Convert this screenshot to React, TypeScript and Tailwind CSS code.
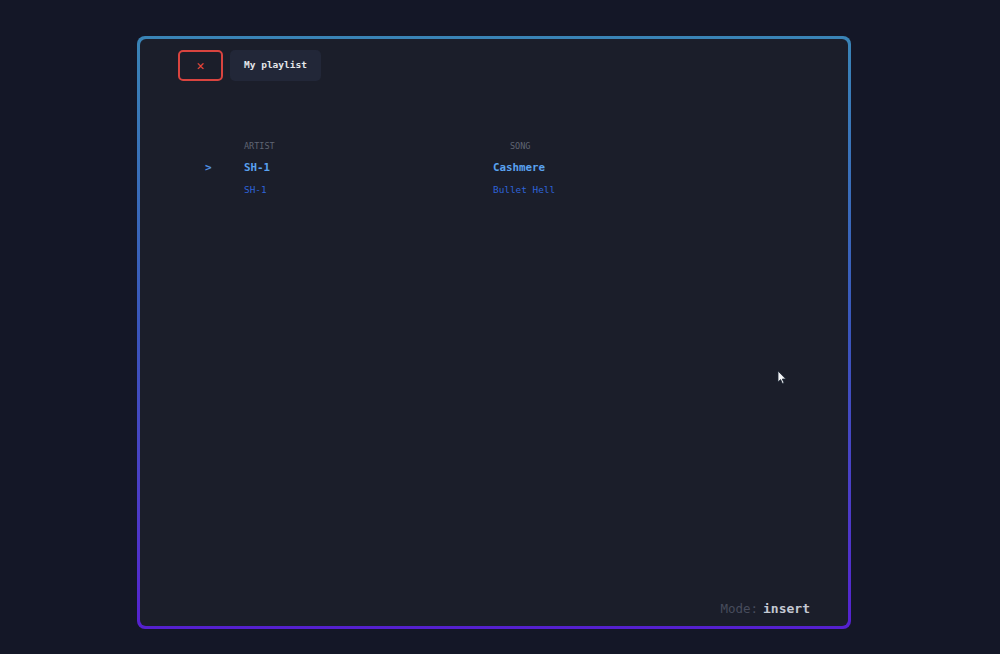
type Track = {
  artist: string;
  song: string;
};

const tracks: Track[] = [
  { artist: "SH-1", song: "Cashmere" },
  { artist: "SH-1", song: "Bullet Hell" },
];

const mono = "font-['DejaVu_Sans_Mono',monospace]";

function Cursor() {
  return (
    <svg width="10" height="15" viewBox="0 0 10 15" className="absolute left-[637px] top-[331px]">
      <path d="M1 1 L1 12 L3.6 9.6 L5.4 13.6 L7 12.9 L5.3 9 L8.8 9 Z" fill="#f3f4f6" stroke="#1f2937" strokeWidth="0.8" />
    </svg>
  );
}

export default function App() {
  const selected = 0;

  return (
    <div className={`min-h-[654px] w-full bg-[#141727] pt-[36px] pl-[137px] ${mono}`}>
      <div className="h-[593px] w-[714px] rounded-[8px] bg-gradient-to-b from-[#3a84b6] via-[#3a55bb] to-[#5520cf] p-[3px]">
        <div className="relative flex h-full flex-col rounded-[6px] bg-[#1b1e2a]">
          <div className="flex items-center gap-[7px] pl-[38px] pt-[11px]">
            <button
              type="button"
              className="flex h-[31px] w-[45px] items-center justify-center rounded-[5px] border-2 border-[#d9443f] text-[13px] text-[#ef4a3c]"
            >
              ✕
            </button>
            <div className="flex h-[31px] items-center rounded-[5px] bg-[#222738] px-[14px] text-[9.5px] font-bold text-[#e5e7eb]">
              My playlist
            </div>
          </div>

          <div className="mt-[59px] pl-[65px]">
            <div className="flex text-[8.5px] uppercase text-[#5f6573]">
              <span className="w-[39px]" />
              <span className="w-[266px]">Artist</span>
              <span>Song</span>
            </div>
            <div className="mt-[7px] flex items-center text-[10.8px] font-bold text-[#5aa2f0]">
              <span className="w-[39px] text-[11px] text-[#4f8fe0]">{selected === 0 ? ">" : ""}</span>
              <span className="w-[249px]">{tracks[0].artist}</span>
              <span>{tracks[0].song}</span>
            </div>
            <div className="mt-[7px] flex items-center text-[9.4px] text-[#2e63d8]">
              <span className="w-[39px]" />
              <span className="w-[249px]">{tracks[1].artist}</span>
              <span>{tracks[1].song}</span>
            </div>
          </div>

          <div className="mt-auto flex items-baseline justify-end gap-[5px] pb-[7px] pr-[38px] text-[12.5px]">
            <span className="text-[#474c5c]">Mode:</span>
            <span className="text-[13px] font-bold text-[#c4c8d2]">insert</span>
          </div>

          <Cursor />
        </div>
      </div>
    </div>
  );
}
